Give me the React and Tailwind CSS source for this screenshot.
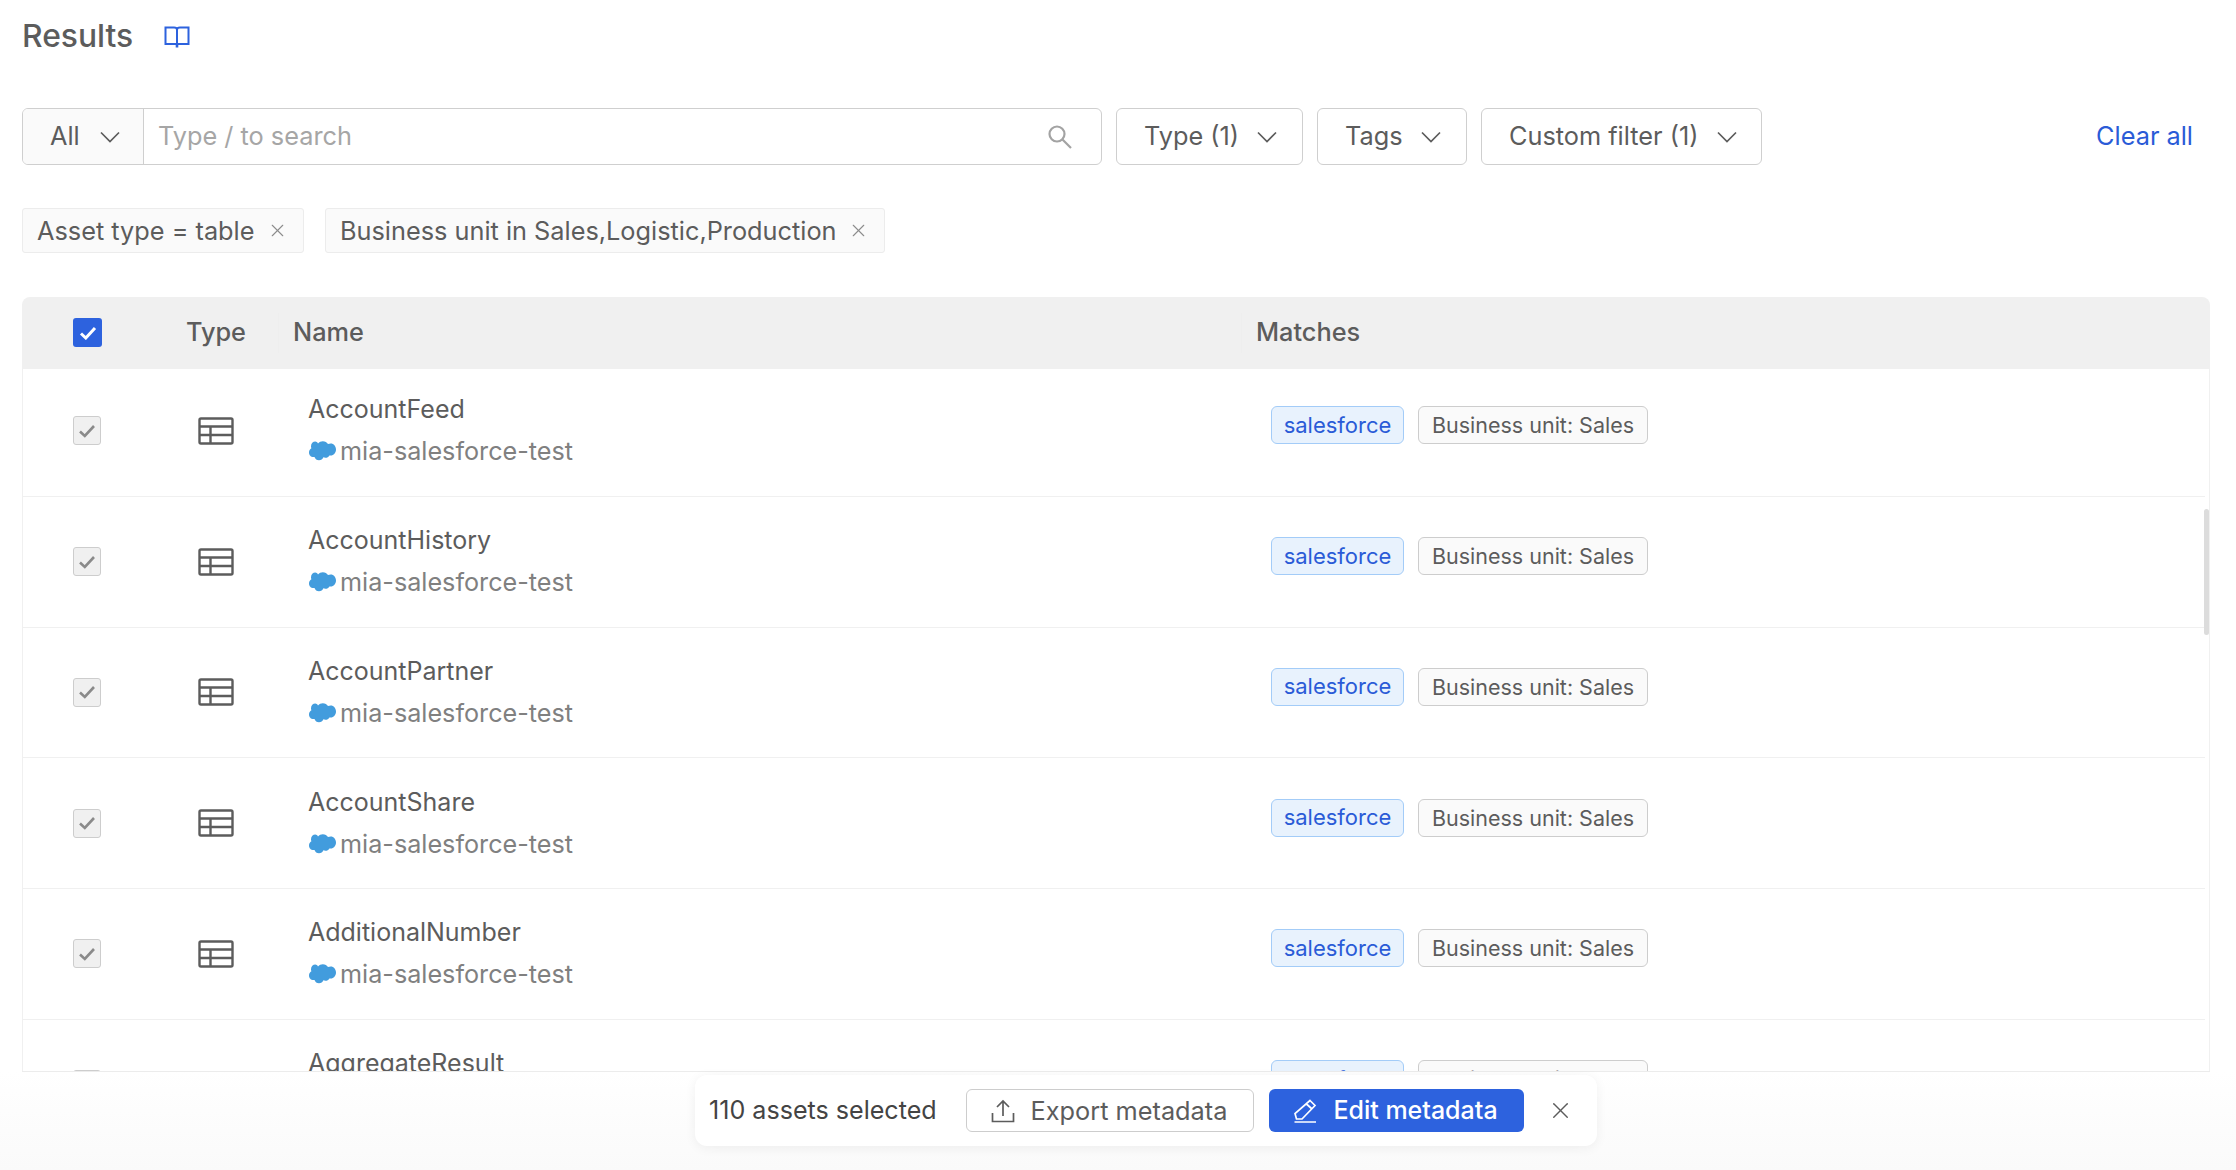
import { X } from "lucide-react";

const rows = [
  "AccountFeed",
  "AccountHistory",
  "AccountPartner",
  "AccountShare",
  "AdditionalNumber",
  "AggregateResult",
];

function BookIcon() {
  return (
    <svg width="26" height="22" viewBox="0 0 26 22" fill="none" stroke="#2d62de" strokeWidth="2">
      <path d="M1.500 1.500h8.500c1.800 0 3 .8 3 2.300v14.200H1.500z" />
      <path d="M24.500 1.500H16c-1.800 0-3 .8-3 2.300v14.200h11.500z" />
      <path d="M13 18v3.500" strokeWidth="2.600" />
    </svg>
  );
}

function Chevron() {
  return (
    <svg width="20" height="12" viewBox="0 0 20 12" fill="none" stroke="#5c5c5c" strokeWidth="1.7">
      <path d="M1 1.500l9 9 9-9" />
    </svg>
  );
}

function SearchIcon() {
  return (
    <svg width="24" height="24" viewBox="0 0 24 24" fill="none" stroke="#a3a3a3" strokeWidth="2.200">
      <circle cx="9" cy="9" r="7.500" />
      <path d="M14.500 14.500L23 23" />
    </svg>
  );
}

function TableIcon() {
  return (
    <svg width="36" height="28" viewBox="0 0 36 28" fill="none" stroke="#5c5c5c" strokeWidth="2.400">
      <rect x="1.500" y="1.500" width="33" height="25" rx="1.500" />
      <path d="M1.500 9.500h33M1.500 18h33M12.500 9.500v17" />
    </svg>
  );
}

function Cloud() {
  return (
    <svg width="30" height="20" viewBox="0 0 30 20" fill="#429cdd" className="shrink-0">
      <path d="M12 2.500C13.300 1 15 .3 16.800.3c2.300 0 4.200 1.100 5.200 2.800 .9-.4 1.800-.6 2.700-.6 3 0 5.300 2.700 5.300 6s-2.400 6-5.300 6c-.5 0-.9 0-1.300-.1-.8 1.400-2.300 2.300-4 2.300-.7 0-1.400-.2-2-.5-.7 1.800-2.400 3.100-4.400 3.100-2.100 0-3.900-1.300-4.500-3.300-.3 .1-.6 .1-1 .1-2.500 0-4.500-2.100-4.500-4.700 0-1.800 1-3.300 2.400-4.100-.3-.6-.4-1.300-.4-2C5 2.600 7 .6 9.300 .6c1.100 0 2 .7 2.700 1.900z" />
    </svg>
  );
}

function Check({ stroke, width = 2.6 }) {
  return (
    <svg width="18" height="14" viewBox="0 0 18 14" fill="none" stroke={stroke} strokeWidth={width}>
      <path d="M2 7.500l4.800 4.500L16 2" />
    </svg>
  );
}

function UploadIcon() {
  return (
    <svg width="24" height="24" viewBox="0 0 24 24" fill="none" stroke="#5c5c5c" strokeWidth="1.700">
      <path d="M12 17V2M6 8l6-6 6 6M1.500 14v8.500h21V14" />
    </svg>
  );
}

function PencilIcon() {
  return (
    <svg width="24" height="24" viewBox="0 0 24 24" fill="none" stroke="#ffffff" strokeWidth="1.700">
      <path d="M17 1.500l5 5L9 20H3.500L2 14.500zM13.500 5l5.500 5M1.500 23H23" />
    </svg>
  );
}

function FilterButton({ label, className }) {
  return (
    <button type="button" className={`h-[57px] flex items-center justify-between border border-[#cfcfcf] rounded-md bg-white text-[25.300px] text-[#5c5c5c] ${className}`}>
      <span className="-mt-[2px]">{label}</span>
      <Chevron />
    </button>
  );
}

function Chip({ label, className }) {
  return (
    <div className={`h-[45px] flex items-center justify-between pl-[14px] pr-[15px] bg-[#fafafa] border border-[#ececec] rounded-[3px] text-[25.300px] text-[#5c5c5c] ${className}`}>
      <span>{label}</span>
      <X size={21} strokeWidth={1.300} color="#8c8c8c" />
    </div>
  );
}

function Row({ name }) {
  return (
    <div className="h-[130.750px] shrink-0 flex items-center border-b border-[#f0f0f0]">
      <div className="w-[28px] h-[29px] ml-[50px] flex items-center justify-center bg-[#f0f0f0] border border-[#cdcdcd] rounded-[3px]">
        <Check stroke="#8a8a8a" />
      </div>
      <div className="ml-[97px]">
        <TableIcon />
      </div>
      <div className="ml-[74px] w-[963px]">
        <div className="-mt-[1px] text-[25px] leading-[34px] text-[#5c5c5c]">{name}</div>
        <div className="mt-[8px] flex items-center text-[25.200px] leading-[34px] text-[#808080]">
          <span className="-ml-[2px] mr-[4px] flex">
            <Cloud />
          </span>
          mia-salesforce-test
        </div>
      </div>
      <div className="flex gap-[14px] mb-[11px]">
        <span className="h-[38px] w-[133px] flex items-center justify-center bg-[#e8f2fd] border border-[#a3ccf8] rounded-md text-[22px] text-[#2a5bd7]">
          salesforce
        </span>
        <span className="h-[38px] w-[230px] flex items-center justify-center bg-[#fafafa] border border-[#cdcdcd] rounded-md text-[21.500px] text-[#5c5c5c]">
          Business unit: Sales
        </span>
      </div>
    </div>
  );
}

export default function App() {
  return (
    <div className="w-[2236px] h-[1170px] overflow-hidden flex flex-col bg-white font-['Inter',sans-serif]">
      <div className="px-[22px] pr-[26px] flex flex-col">
        <div className="h-[72px] flex items-center gap-[31px]">
          <h1 className="text-[31.800px] font-medium text-[#5c5c5c]">Results</h1>
          <span className="mt-[2px] flex">
            <BookIcon />
          </span>
        </div>

        <div className="mt-[36px] flex items-center gap-[14px]">
          <div className="w-[1080px] h-[57px] flex border border-[#cfcfcf] rounded-md overflow-hidden">
            <div className="w-[121px] flex items-center justify-between pl-[27px] pr-[23px] bg-[#fafafa] border-r border-[#cfcfcf] text-[25.300px] text-[#5c5c5c]">
              <span className="-mt-[2px]">All</span>
              <Chevron />
            </div>
            <div className="flex-1 flex items-center justify-between pl-[14px] pr-[29px] text-[25.300px] text-[#a6a6a6]">
              <span className="-mt-[2px]">Type / to search</span>
              <SearchIcon />
            </div>
          </div>
          <FilterButton label="Type (1)" className="w-[187px] pl-[27px] pr-[25px]" />
          <FilterButton label="Tags" className="w-[150px] pl-[27px] pr-[25px]" />
          <FilterButton label="Custom filter (1)" className="w-[281px] pl-[27px] pr-[24px]" />
          <a href="#" className="ml-auto mr-[17px] -mt-[2px] text-[25.300px] text-[#2a5bd7]">
            Clear all
          </a>
        </div>

        <div className="mt-[43px] flex gap-[21px]">
          <Chip label="Asset type = table" className="w-[282px]" />
          <Chip label="Business unit in Sales,Logistic,Production" className="w-[560px]" />
        </div>

        <div className="mt-[44px] h-[775px] flex flex-col border-b border-[#ececec]">
          <div className="relative z-10 h-[72px] shrink-0 flex items-center bg-[#f0f0f0] rounded-t-lg text-[25.300px] font-medium text-[#5c5c5c]">
            <div className="w-[29px] h-[29px] ml-[51px] mt-[-1px] flex items-center justify-center bg-[#2d62de] rounded-[3px]">
              <Check stroke="#ffffff" width={3} />
            </div>
            <span className="ml-[84px] w-[92px] -mt-[2px]">Type</span>
            <span className="pl-[14px] w-[963px] border-l border-[#eeeeee] h-[40px] leading-[37px]">Name</span>
            <span className="pl-[14px] border-l border-[#eeeeee] h-[40px] leading-[37px]">Matches</span>
          </div>
          <div className="relative flex-1 overflow-hidden border-x border-[#f0f0f0] pr-[4px]">
            <div className="-mt-[3px] flex flex-col">
              {rows.map((name) => (
                <Row key={name} name={name} />
              ))}
            </div>
            <div className="absolute right-0 top-[140px] w-[5px] h-[126px] rounded-sm bg-[#dcdcdc]" />
          </div>
        </div>
      </div>

      <div className="flex-1 bg-gradient-to-b from-white to-[#fafafa]">
        <div className="ml-[695px] mt-[3px] w-[902px] h-[71px] flex items-center pl-[14px] bg-white rounded-xl shadow-[0_2px_12px_rgba(0,0,0,0.06)]">
          <span className="text-[25.100px] text-[#444444] w-[257px] whitespace-nowrap">110 assets selected</span>
          <button type="button" className="w-[288px] h-[43px] flex items-center justify-center gap-[16px] pr-[2px] bg-white border border-[#cdcdcd] rounded-md text-[25.300px] text-[#5c5c5c]">
            <UploadIcon />
            Export metadata
          </button>
          <button type="button" className="ml-[15px] w-[255px] h-[43px] flex items-center justify-center gap-[16px] pr-[2px] bg-[#2d62de] rounded-md text-[25px] font-medium text-white">
            <PencilIcon />
            Edit metadata
          </button>
          <X size={27} strokeWidth={1.300} color="#5c5c5c" className="ml-[23px]" />
        </div>
      </div>
    </div>
  );
}
